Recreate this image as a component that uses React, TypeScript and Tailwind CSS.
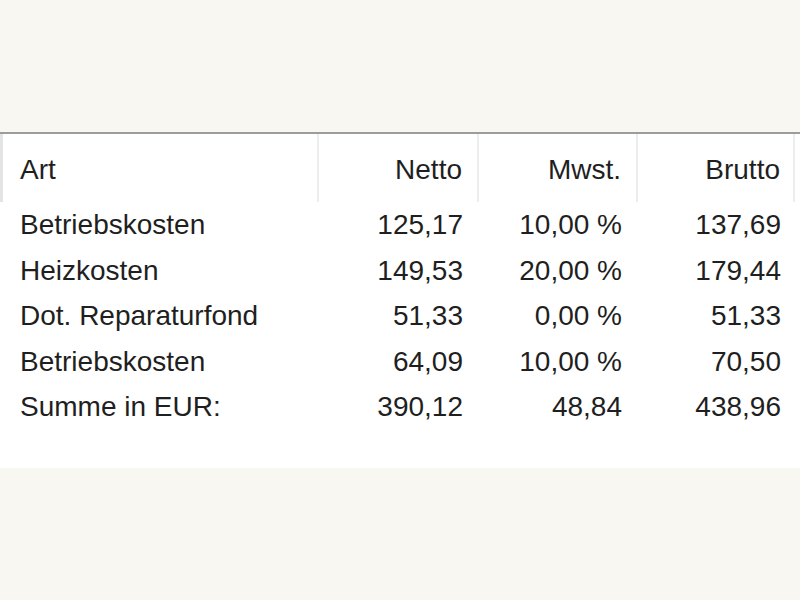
const rows = [
  { art: 'Betriebskosten', netto: '125,17', mwst: '10,00 %', brutto: '137,69' },
  { art: 'Heizkosten', netto: '149,53', mwst: '20,00 %', brutto: '179,44' },
  { art: 'Dot. Reparaturfond', netto: '51,33', mwst: '0,00 %', brutto: '51,33' },
  { art: 'Betriebskosten', netto: '64,09', mwst: '10,00 %', brutto: '70,50' },
  { art: 'Summe in EUR:', netto: '390,12', mwst: '48,84', brutto: '438,96' },
]

const cols = 'grid grid-cols-[319px_160px_159px_157px_5px]'

export default function App() {
  return (
    <div className="flex h-[600px] w-[800px] flex-col bg-[#f9f7f2] font-['Liberation_Sans',Arial,sans-serif] text-[28px] leading-[45.5px] text-[#1f1f1f]">
      <div className="h-[132px]" />
      <div className="h-[2px] bg-[#9c9c9c]" />
      <div className="h-[334px] bg-white">
        <div className={`${cols} h-[68px]`}>
          <div className="border-l-[3px] border-r-2 border-l-[#e4e4e4] border-r-[#ececec] pl-[17px] pt-[13px]">Art</div>
          <div className="border-r-2 border-[#ececec] pr-[15px] pt-[13px] text-right">Netto</div>
          <div className="border-r-2 border-[#ececec] pr-[15px] pt-[13px] text-right">Mwst.</div>
          <div className="border-r-2 border-[#ececec] pr-[13px] pt-[13px] text-right">Brutto</div>
          <div />
        </div>
        {rows.map((r, i) => (
          <div key={i} className={cols}>
            <div className="pl-[20px]">{r.art}</div>
            <div className="pr-[16px] text-right">{r.netto}</div>
            <div className="pr-[16px] text-right">{r.mwst}</div>
            <div className="pr-[14px] text-right">{r.brutto}</div>
            <div />
          </div>
        ))}
      </div>
    </div>
  )
}
